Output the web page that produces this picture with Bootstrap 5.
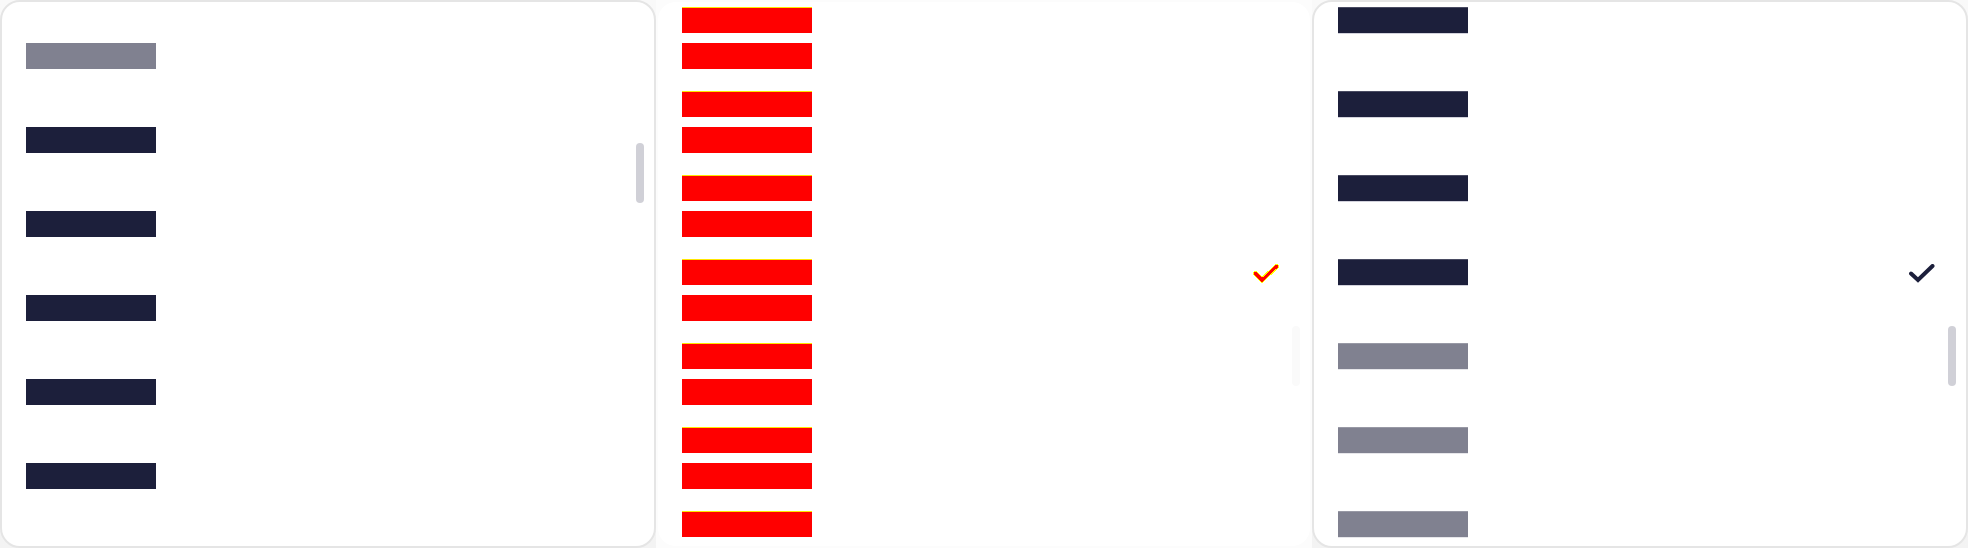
<!DOCTYPE html>
<html lang="en">
<head>
<meta charset="utf-8">
<meta name="viewport" content="width=device-width, initial-scale=1">
<title>List comparison</title>
<link href="https://cdn.jsdelivr.net/npm/bootstrap@5.3.0/dist/css/bootstrap.min.css" rel="stylesheet">
<style>
  body { font-family: "Liberation Sans", sans-serif; background: #fff; }
  .pane { background: linear-gradient(#f9f9f9, #f3f3f3); }
  .pane-diff { background: #fcfcfc; }
  .sheet { background: #fff; border: 2px solid #e5e5e5; border-radius: 20px; }
  .pane-diff .sheet { border-color: #fcfcfc; }
  .entries { padding: 5px 24px 0; margin: 0; }
  .entries.offset-start { padding-top: 41px; }
  .entry { height: 84px; }
  .strip { width: 130px; height: 26px; background: #1c1f3b; }
  .strip.muted { background: #808190; }
  .soft { border-top: 1px solid #494b62; border-bottom: 1px solid #d2d2dc; height: 27px; }
  .soft.muted { border-top-color: #9899a5; border-bottom-color: #e6e6ea; }
  .changed { background: #f00; }
  .changed-edge { border-top: 1px solid #ffe600; }
  .changed + .changed { margin-top: 10px; }
  .tick { margin: 5px 7px 0 0; }
  .thumb { width: 8px; height: 60px; right: 10px; top: 324px; border-radius: 4px; background: #d0d0d7; }
  .thumb-high { top: 141px; }
  .thumb-faint { background: #fafafa; }
</style>
</head>
<body>
<main class="container-fluid p-0">
  <div class="row g-0 min-vh-100">
    <section class="col-4 pane d-flex" aria-label="Before">
      <div class="sheet flex-fill position-relative">
        <ul class="entries offset-start list-unstyled">
          <li class="entry"><div class="strip muted"></div></li>
          <li class="entry"><div class="strip"></div></li>
          <li class="entry"><div class="strip"></div></li>
          <li class="entry"><div class="strip"></div></li>
          <li class="entry"><div class="strip"></div></li>
          <li class="strip"></li>
        </ul>
        <div class="thumb thumb-high position-absolute"></div>
      </div>
    </section>

    <section class="col-4 pane-diff d-flex" aria-label="Difference">
      <div class="sheet flex-fill position-relative">
        <ul class="entries list-unstyled">
          <li class="entry"><div class="strip changed changed-edge"></div><div class="strip changed"></div></li>
          <li class="entry"><div class="strip changed changed-edge"></div><div class="strip changed"></div></li>
          <li class="entry"><div class="strip changed changed-edge"></div><div class="strip changed"></div></li>
          <li class="entry d-flex justify-content-between">
            <div><div class="strip changed changed-edge"></div><div class="strip changed"></div></div>
            <svg class="tick" width="26" height="19" viewBox="0 0 26 19" fill="none" stroke-linecap="round" aria-hidden="true" shape-rendering="crispEdges">
              <path d="M2.500 9.500L9 16L23.500 2.500" stroke="#ff0" stroke-width="5"/>
              <path d="M2.500 9.500L9 16L23.500 2.500" stroke="#f00" stroke-width="3"/>
            </svg>
          </li>
          <li class="entry"><div class="strip changed changed-edge"></div><div class="strip changed"></div></li>
          <li class="entry"><div class="strip changed changed-edge"></div><div class="strip changed"></div></li>
          <li class="strip changed changed-edge"></li>
        </ul>
        <div class="thumb thumb-faint position-absolute"></div>
      </div>
    </section>

    <section class="col-4 pane d-flex" aria-label="After">
      <div class="sheet flex-fill position-relative">
        <ul class="entries list-unstyled">
          <li class="entry"><div class="strip soft"></div></li>
          <li class="entry"><div class="strip soft"></div></li>
          <li class="entry"><div class="strip soft"></div></li>
          <li class="entry d-flex justify-content-between">
            <div class="strip soft"></div>
            <svg class="tick" width="26" height="19" viewBox="0 0 26 19" fill="none" stroke="#1c1f3b" stroke-width="4" stroke-linecap="round" role="img" aria-label="Selected">
              <path d="M2 9.500L9 16L23.500 2"/>
            </svg>
          </li>
          <li class="entry"><div class="strip soft muted"></div></li>
          <li class="entry"><div class="strip soft muted"></div></li>
          <li class="strip soft muted"></li>
        </ul>
        <div class="thumb position-absolute"></div>
      </div>
    </section>
  </div>
</main>
<script src="https://cdn.jsdelivr.net/npm/bootstrap@5.3.0/dist/js/bootstrap.bundle.min.js"></script>
</body>
</html>
